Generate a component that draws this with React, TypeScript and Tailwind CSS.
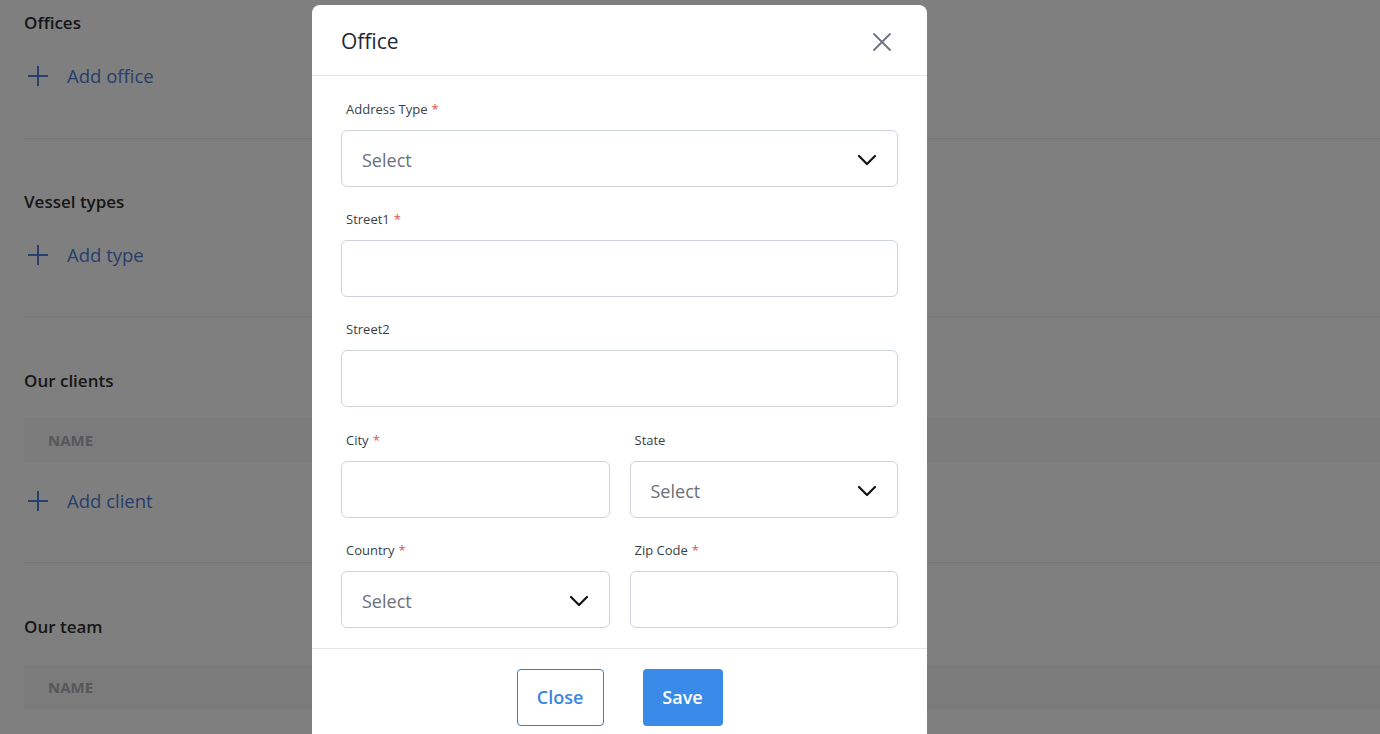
import { ReactNode } from 'react';

const FONT = { fontFamily: '"Open Sans", "Noto Sans", sans-serif' };

const PlusIcon = () => (
  <svg width="20" height="20" viewBox="0 0 20 20" fill="none" stroke="currentColor" strokeWidth="2" strokeLinecap="square">
    <path d="M10 1v18M1 10h18" />
  </svg>
);

const ChevronDown = () => (
  <svg width="20" height="12" viewBox="0 0 20 12" fill="none" stroke="#111" strokeWidth="2.2" strokeLinecap="round" strokeLinejoin="round">
    <path d="M2 2l8 8 8-8" />
  </svg>
);

const CloseIcon = () => (
  <svg width="20" height="20" viewBox="0 0 20 20" fill="none" stroke="#6b7280" strokeWidth="1.8" strokeLinecap="round">
    <path d="M2 2l16 16M18 2L2 18" />
  </svg>
);

const AddLink = ({ label }: { label: string }) => (
  <div className="flex h-6 items-center gap-[19px] pl-1 text-[#4e7ed6]">
    <PlusIcon />
    <span className="text-[18.5px]">{label}</span>
  </div>
);

const SectionTitle = ({ children }: { children: ReactNode }) => (
  <h2 className="h-6 text-[17px] font-semibold leading-6 text-[#2e2e2e]">{children}</h2>
);

const TableHead = () => (
  <div className="flex h-11 items-center bg-[#f6f6f6] pl-6 text-[15px] font-bold uppercase text-[#acaeb2]">Name</div>
);

const Field = ({ label, required, children }: { label: string; required?: boolean; children: ReactNode }) => (
  <div className="flex flex-col">
    <label className="mb-3 h-[18px] pl-[5px] text-[13px] leading-[18px] text-[#3a3f47]">
      {label}
      {required && <span className="ml-1 text-[#d9534f]">*</span>}
    </label>
    {children}
  </div>
);

const TextInput = () => (
  <div className="h-[57px] rounded-md border border-[#cfd4da] bg-white" />
);

const SelectInput = () => (
  <div className="flex h-[57px] items-center justify-between rounded-md border border-[#cfd4da] bg-white pt-[3px] pl-5 pr-5">
    <span className="text-[18px] text-[#6b7079]">Select</span>
    <ChevronDown />
  </div>
);

export default function App() {
  return (
    <div className="relative h-screen overflow-hidden bg-white" style={FONT}>
      <div className="pl-6">
        <section className="border-b border-[#eeeeee] pt-[11px] pb-[50px]">
          <SectionTitle>Offices</SectionTitle>
          <div className="mt-[29px]">
            <AddLink label="Add office" />
          </div>
        </section>
        <section className="border-b border-[#eeeeee] pt-[51px] pb-[49px]">
          <SectionTitle>Vessel types</SectionTitle>
          <div className="mt-[29px]">
            <AddLink label="Add type" />
          </div>
        </section>
        <section className="border-b border-[#eeeeee] pt-[52px] pb-[49px]">
          <SectionTitle>Our clients</SectionTitle>
          <div className="mt-[25px]">
            <TableHead />
          </div>
          <div className="mt-[27px]">
            <AddLink label="Add client" />
          </div>
        </section>
        <section className="pt-[52px]">
          <SectionTitle>Our team</SectionTitle>
          <div className="mt-[26px]">
            <TableHead />
          </div>
        </section>
      </div>

      <div className="fixed inset-0 bg-black/50" />

      <div className="fixed left-[312px] top-[5px] w-[615px] rounded-lg bg-white">
        <div className="flex h-[71px] items-center justify-between border-b border-[#e5e7eb] pt-1 pl-[29px] pr-[35px]">
          <h3 className="text-[21px] text-[#1f2937]">Office</h3>
          <CloseIcon />
        </div>
        <div className="flex flex-col gap-[23px] px-[29px] pt-6 pb-5">
          <Field label="Address Type" required>
            <SelectInput />
          </Field>
          <Field label="Street1" required>
            <TextInput />
          </Field>
          <Field label="Street2">
            <TextInput />
          </Field>
          <div className="mt-px grid grid-cols-2 gap-x-5 gap-y-[23px]">
            <Field label="City" required>
              <TextInput />
            </Field>
            <Field label="State">
              <SelectInput />
            </Field>
            <Field label="Country" required>
              <SelectInput />
            </Field>
            <Field label="Zip Code" required>
              <TextInput />
            </Field>
          </div>
        </div>
        <div className="flex justify-center gap-[39px] border-t border-[#e5e7eb] pt-5 pb-5">
          <button className="h-[57px] w-[87px] rounded border border-[#3d7bc4] bg-white text-[18px] font-semibold text-[#3b86dc]">
            Close
          </button>
          <button className="h-[57px] w-[80px] rounded bg-[#3a8aea] text-[18px] font-semibold text-white">
            Save
          </button>
        </div>
      </div>
    </div>
  );
}
